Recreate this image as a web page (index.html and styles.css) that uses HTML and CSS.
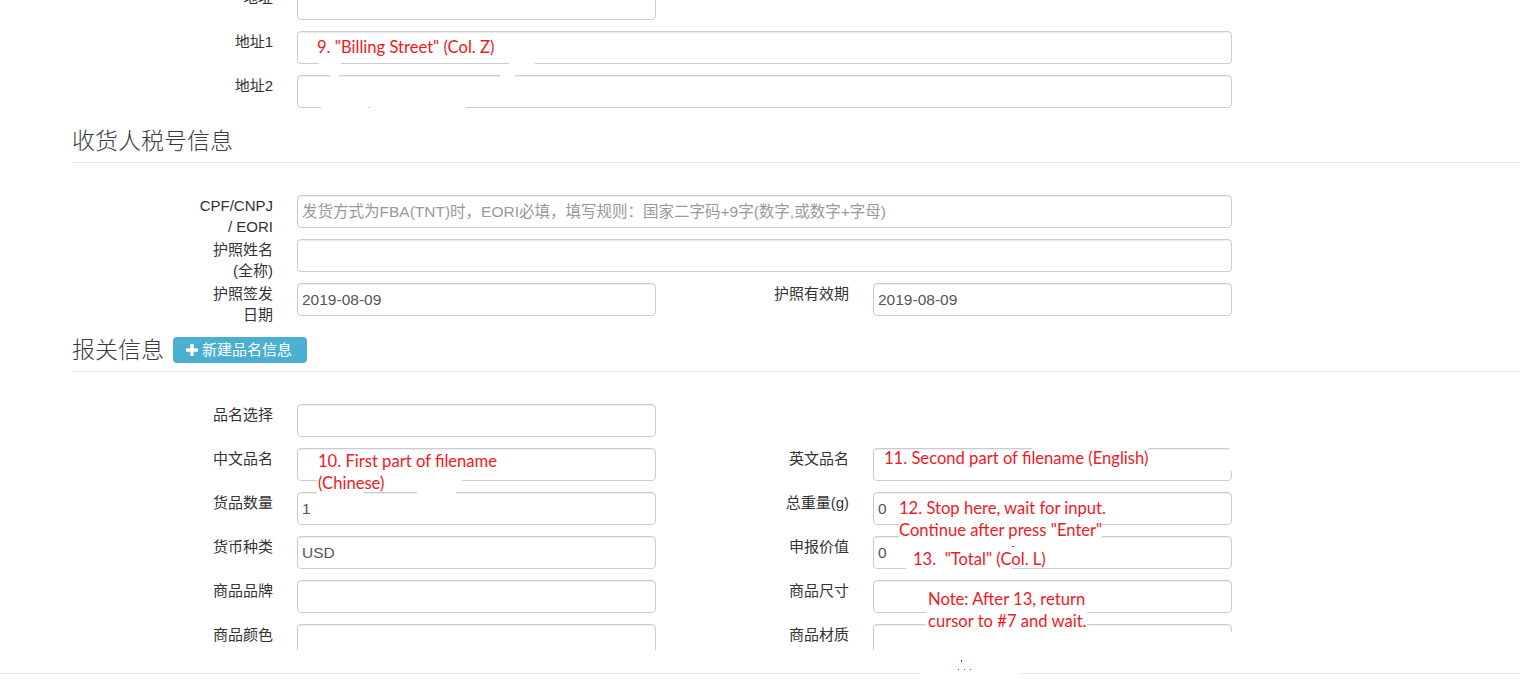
FILE: index.html
```html
<!DOCTYPE html>
<html lang="zh-CN">
<head>
<meta charset="utf-8">
<title>收货人信息</title>
<link rel="stylesheet" href="styles.css">
</head>
<body>
<div class="page">
  <div class="viewport">
    <div class="content">
      <div class="form-grid">
        <label class="lbl">地址</label>
        <input class="inp" type="text">

        <label class="lbl">地址1</label>
        <input class="inp full" type="text">

        <label class="lbl">地址2</label>
        <input class="inp full" type="text">
      </div>

      <h3 class="section-title">收货人税号信息</h3>
      <hr class="rule">

      <div class="form-grid">
        <label class="lbl">CPF/CNPJ<br>/ EORI</label>
        <input class="inp full" type="text" placeholder="发货方式为FBA(TNT)时，EORI必填，填写规则：国家二字码+9字(数字,或数字+字母)">

        <label class="lbl">护照姓名<br>(全称)</label>
        <input class="inp full" type="text">

        <label class="lbl">护照签发<br>日期</label>
        <input class="inp" type="text" value="2019-08-09">
        <label class="lbl r">护照有效期</label>
        <input class="inp r" type="text" value="2019-08-09">
      </div>

      <h3 class="section-title second">报关信息
        <button class="btn-add" type="button">
          <svg class="plus" width="12" height="12" viewBox="0 0 12 12" aria-hidden="true"><rect x="4.3" y="0" width="3.4" height="12" fill="#fff"/><rect x="0" y="4.3" width="12" height="3.4" fill="#fff"/></svg>
          <span>新建品名信息</span>
        </button>
      </h3>
      <hr class="rule">

      <div class="form-grid">
        <label class="lbl">品名选择</label>
        <input class="inp" type="text">

        <label class="lbl">中文品名</label>
        <input class="inp" type="text">
        <label class="lbl r">英文品名</label>
        <input class="inp r" type="text">

        <label class="lbl">货品数量</label>
        <input class="inp" type="text" value="1">
        <label class="lbl r">总重量(g)</label>
        <input class="inp r" type="text" value="0">

        <label class="lbl">货币种类</label>
        <input class="inp" type="text" value="USD">
        <label class="lbl r">申报价值</label>
        <input class="inp r" type="text" value="0">

        <label class="lbl">商品品牌</label>
        <input class="inp" type="text">
        <label class="lbl r">商品尺寸</label>
        <input class="inp r" type="text">

        <label class="lbl">商品颜色</label>
        <input class="inp" type="text">
        <label class="lbl r">商品材质</label>
        <input class="inp r" type="text">
      </div>
    </div>
  </div>
  <div class="footer"></div>

  <div class="notes">
    <span class="patch p1"></span>
    <span class="patch p2"></span>
    <span class="patch p3"></span>
    <span class="patch p4"></span>
    <span class="patch p5"></span>
    <span class="patch p6"></span>
    <span class="patch p7"></span>
    <span class="patch p8"></span>
    <span class="patch p9"></span>
    <span class="patch p10"></span>
    <span class="patch p11"></span>
    <span class="patch p12"></span>
    <span class="patch p13"></span>
    <span class="patch p14"></span>
    <span class="patch p15"></span>
    <span class="patch p16"></span>
    <span class="patch p17"></span>
    <span class="patch p18"></span>

    <div class="note n1">9. "Billing Street" (Col. Z)</div>
    <div class="note n2">10. First part of filename<br>(Chinese)</div>
    <div class="note n3">11. Second part of filename (English)</div>
    <div class="note n4">12. Stop here, wait for input.<br>Continue after press "Enter"</div>
    <div class="note n5">13.&nbsp; "Total" (Col. L)</div>
    <div class="note n6">Note: After 13, return<br>cursor to #7 and wait.</div>

    <span class="dot d1"></span>
    <span class="dot d2"></span>
    <span class="dot d3"></span>
    <span class="dot d4"></span>
    <span class="dot d5"></span>
  </div>
</div>
</body>
</html>
```

FILE: styles.css
```css
html, body {
  margin: 0;
  padding: 0;
  background: #fff;
}

body {
  font-family: "Liberation Sans", "Noto Sans CJK SC", sans-serif;
  color: #333;
}

.page {
  position: relative;
  width: 1520px;
  height: 696px;
  overflow: hidden;
}

.viewport {
  height: 650px;
  overflow: hidden;
}

.content {
  margin-top: -13px;
  padding-left: 72px;
}

.form-grid {
  display: grid;
  grid-template-columns: 78px 359px 67px 78px 359px;
  grid-auto-rows: 33px;
  column-gap: 24px;
  row-gap: 11px;
  margin-left: 123px;
}

.lbl {
  grid-column: 1;
  height: 33px;
  box-sizing: border-box;
  padding-top: 0;
  text-align: right;
  font-size: 15px;
  line-height: 21px;
  color: #333;
  white-space: nowrap;
}

.lbl.r {
  grid-column: 4;
}

.inp {
  grid-column: 2;
  width: 100%;
  min-width: 0;
  height: 33px;
  box-sizing: border-box;
  margin: 0;
  padding: 0 4px;
  border: 1px solid #ccc;
  border-radius: 4px;
  background: #fff;
  box-shadow: inset 0 1px 1px rgba(0, 0, 0, 0.075);
  font-family: "Liberation Sans", "Noto Sans CJK SC", sans-serif;
  font-size: 15.5px;
  color: #555;
  outline: none;
}

.inp.full {
  grid-column: 2 / 6;
}

.inp.r {
  grid-column: 5;
}

.inp::placeholder {
  color: #999;
}

.section-title {
  display: flex;
  align-items: center;
  gap: 9px;
  height: 26px;
  margin: 20px 0 0;
  font-size: 23px;
  font-weight: 300;
  line-height: 26px;
  color: #3a3a3a;
}

.section-title.second {
  margin-top: 21px;
}

.rule {
  height: 0;
  margin: 8px 0 32px;
  border: 0;
  border-top: 1px solid #e5e5e5;
}

.btn-add {
  display: inline-flex;
  align-items: center;
  gap: 4px;
  height: 26px;
  box-sizing: border-box;
  padding: 0 15px 0 13px;
  border: 0;
  border-radius: 4px;
  background: #4aafd0;
  color: #fff;
  font-family: "Liberation Sans", "Noto Sans CJK SC", sans-serif;
  font-size: 15px;
  font-weight: normal;
  line-height: 26px;
  cursor: pointer;
}

.btn-add .plus {
  display: block;
  flex: none;
}

.footer {
  margin-top: 23px;
  height: 22px;
  border-top: 1px solid #e5e5e5;
}

/* annotation layer lying over the form */
.notes {
  position: absolute;
  left: 0;
  top: 0;
  width: 1520px;
  height: 696px;
  pointer-events: none;
}

.patch {
  position: absolute;
  background: #fff;
}

.p1  { left: 319px;  top: 60px;  width: 22px;  height: 6px; }
.p2  { left: 509px;  top: 60px;  width: 26px;  height: 6px; }
.p3  { left: 330px;  top: 73px;  width: 9px;   height: 4px; }
.p4  { left: 500px;  top: 73px;  width: 15px;  height: 4px; }
.p5  { left: 321px;  top: 100px; width: 47px;  height: 10px; }
.p6  { left: 370px;  top: 103px; width: 96px;  height: 7px; }
.p7  { left: 317px;  top: 477px; width: 145px; height: 6px; }
.p8  { left: 317px;  top: 489px; width: 47px;  height: 6px; }
.p9  { left: 417px;  top: 489px; width: 39px;  height: 6px; }
.p10 { left: 1032px; top: 446px; width: 116px; height: 4px; }
.p11 { left: 1229px; top: 449px; width: 6px;   height: 22px; }
.p12 { left: 899px;  top: 521px; width: 203px; height: 6px; }
.p13 { left: 899px;  top: 533px; width: 203px; height: 6px; }
.p14 { left: 906px;  top: 565px; width: 106px; height: 6px; }
.p15 { left: 926px;  top: 609px; width: 161px; height: 6px; }
.p16 { left: 926px;  top: 621px; width: 161px; height: 6px; }
.p17 { left: 1228px; top: 632px; width: 8px;   height: 20px; }
.p18 { left: 920px;  top: 670px; width: 100px; height: 6px; }

.note {
  position: absolute;
  font-family: Lato, "Open Sans", sans-serif;
  font-size: 16.6px;
  line-height: 22px;
  color: #f2181e;
  white-space: nowrap;
}

.n1 { left: 317px; top: 36px; }
.n2 { left: 318px; top: 450px; }
.n3 { left: 884px; top: 447px; }
.n4 { left: 899px; top: 497px; }
.n5 { left: 913px; top: 548px; }
.n6 { left: 928px; top: 588px; }

.dot {
  position: absolute;
  width: 1px;
  height: 1px;
  background: #f2181e;
}

.d1 { left: 1012px; top: 546px; width: 2px; }
.d2 { left: 961px;  top: 660px; height: 2px; }
.d3 { left: 958px;  top: 669px; }
.d4 { left: 964px;  top: 669px; }
.d5 { left: 970px;  top: 669px; }
```
